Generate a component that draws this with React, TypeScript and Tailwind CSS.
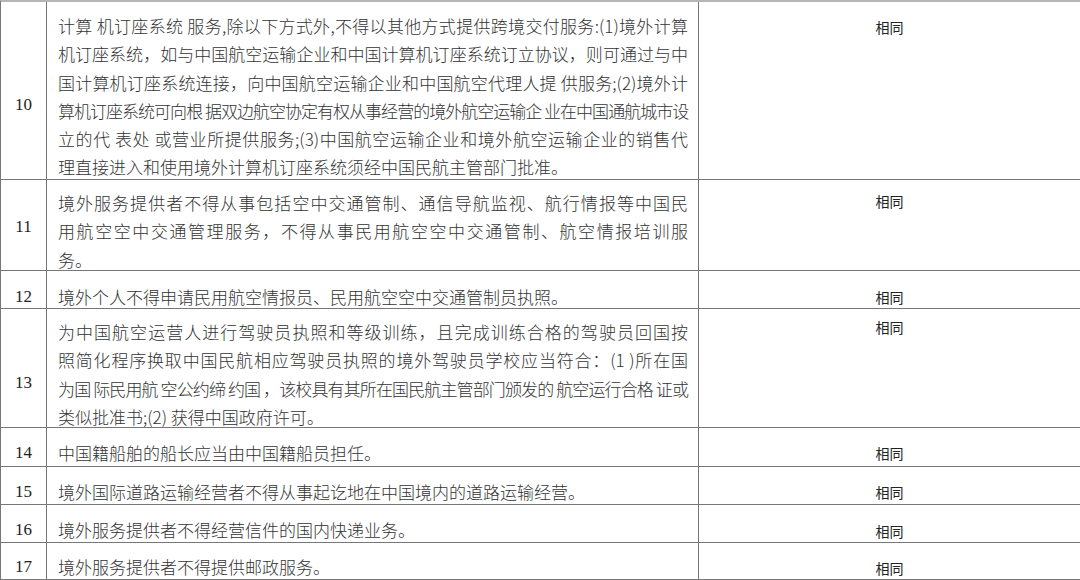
import React from 'react';

interface Line {
  t: string;
  c?: string;
}

interface Row {
  num: string;
  lines: Line[];
  h: string;
  numPad: string;
  textPad: string;
  samePad: string;
}

// 每行的高度与文字位置按原图逐行量出
const rows: Row[] = [
  {
    num: '10',
    lines: [
      { t: '计算 机订座系统 服务,除以下方式外,不得以其他方式提供跨境交付服务:(1)境外计算' },
      { t: '机订座系统，如与中国航空运输企业和中国计算机订座系统订立协议，则可通过与中' },
      { t: '国计算机订座系统连接，向中国航空运输企业和中国航空代理人提 供服务;(2)境外计' },
      { t: '算机订座系统可向根 据双边航空协定有权从事经营的境外航空运输企 业在中国通航城市设', c: 'tracking-[-1.2px]' },
      { t: '立的代 表处 或营业所提供服务;(3)中国航空运输企业和境外航空运输企业的销售代' },
      { t: '理直接进入和使用境外计算机订座系统须经中国民航主管部门批准。' },
    ],
    h: 'h-[178px]',
    numPad: 'pt-[89px]',
    textPad: 'pt-[10px]',
    samePad: 'pt-[11px]',
  },
  {
    num: '11',
    lines: [
      { t: '境外服务提供者不得从事包括空中交通管制、通信导航监视、航行情报等中国民' },
      { t: '用航空空中交通管理服务，不得从事民用航空空中交通管制、航空情报培训服' },
      { t: '务。' },
    ],
    h: 'h-[91px]',
    numPad: 'pt-[33px]',
    textPad: 'pt-[9px]',
    samePad: 'pt-[7px]',
  },
  {
    num: '12',
    lines: [{ t: '境外个人不得申请民用航空情报员、民用航空空中交通管制员执照。' }],
    h: 'h-[38px]',
    numPad: 'pt-[12px]',
    textPad: 'pt-[12px]',
    samePad: 'pt-[12px]',
  },
  {
    num: '13',
    lines: [
      { t: '为中国航空运营人进行驾驶员执照和等级训练，且完成训练合格的驾驶员回国按' },
      { t: '照简化程序换取中国民航相应驾驶员执照的境外驾驶员学校应当符合：(1 )所在国' },
      { t: '为国 际民用航 空公约缔 约国 ，该校具有其所在国民航主管部门颁发的 航空运行合格 证或', c: 'tracking-[-1px]' },
      { t: '类似批准书;(2) 获得中国政府许可。' },
    ],
    h: 'h-[119px]',
    numPad: 'pt-[60px]',
    textPad: 'pt-[9px]',
    samePad: 'pt-[4px]',
  },
  {
    num: '14',
    lines: [{ t: '中国籍船舶的船长应当由中国籍船员担任。' }],
    h: 'h-[39px]',
    numPad: 'pt-[11px]',
    textPad: 'pt-[11px]',
    samePad: 'pt-[11px]',
  },
  {
    num: '15',
    lines: [{ t: '境外国际道路运输经营者不得从事起讫地在中国境内的道路运输经营。' }],
    h: 'h-[38px]',
    numPad: 'pt-[11px]',
    textPad: 'pt-[11px]',
    samePad: 'pt-[11px]',
  },
  {
    num: '16',
    lines: [{ t: '境外服务提供者不得经营信件的国内快递业务。' }],
    h: 'h-[38px]',
    numPad: 'pt-[11px]',
    textPad: 'pt-[11px]',
    samePad: 'pt-[12px]',
  },
  {
    num: '17',
    lines: [{ t: '境外服务提供者不得提供邮政服务。' }],
    h: 'h-[37px]',
    numPad: 'pt-[10px]',
    textPad: 'pt-[10px]',
    samePad: 'pt-[11px]',
  },
];

export default function App() {
  return (
    <div className="w-[1080px] h-[580px] overflow-hidden bg-white text-[#333]">
      <div className="border-t-2 border-l border-t-[#b5b5b5] border-l-[#777]">
        {rows.map(row => (
          <div
            key={row.num}
            className={`grid grid-cols-[46px_652px_1fr] border-b border-[#777] ${row.h}`}
          >
            <div
              className={`border-r border-[#777] text-center text-[17px] leading-[28px] text-[#222] font-['Liberation_Serif',serif] ${row.numPad}`}
            >
              {row.num}
            </div>
            <div
              className={`border-r border-[#777] pl-[11px] pr-[10px] text-[17px] leading-[28.3px] font-light font-['Noto_Sans_CJK_SC',sans-serif] ${row.textPad}`}
            >
              {row.lines.map((line, i) => (
                <div
                  key={i}
                  className={`whitespace-nowrap ${
                    i < row.lines.length - 1
                      ? 'text-justify [text-align-last:justify]'
                      : 'text-left'
                  } ${line.c ?? ''}`}
                >
                  {line.t}
                </div>
              ))}
            </div>
            <div
              className={`text-center text-[14px] leading-[28px] text-[#222] font-['Noto_Sans_CJK_SC',sans-serif] ${row.samePad}`}
            >
              相同
            </div>
          </div>
        ))}
      </div>
    </div>
  );
}
